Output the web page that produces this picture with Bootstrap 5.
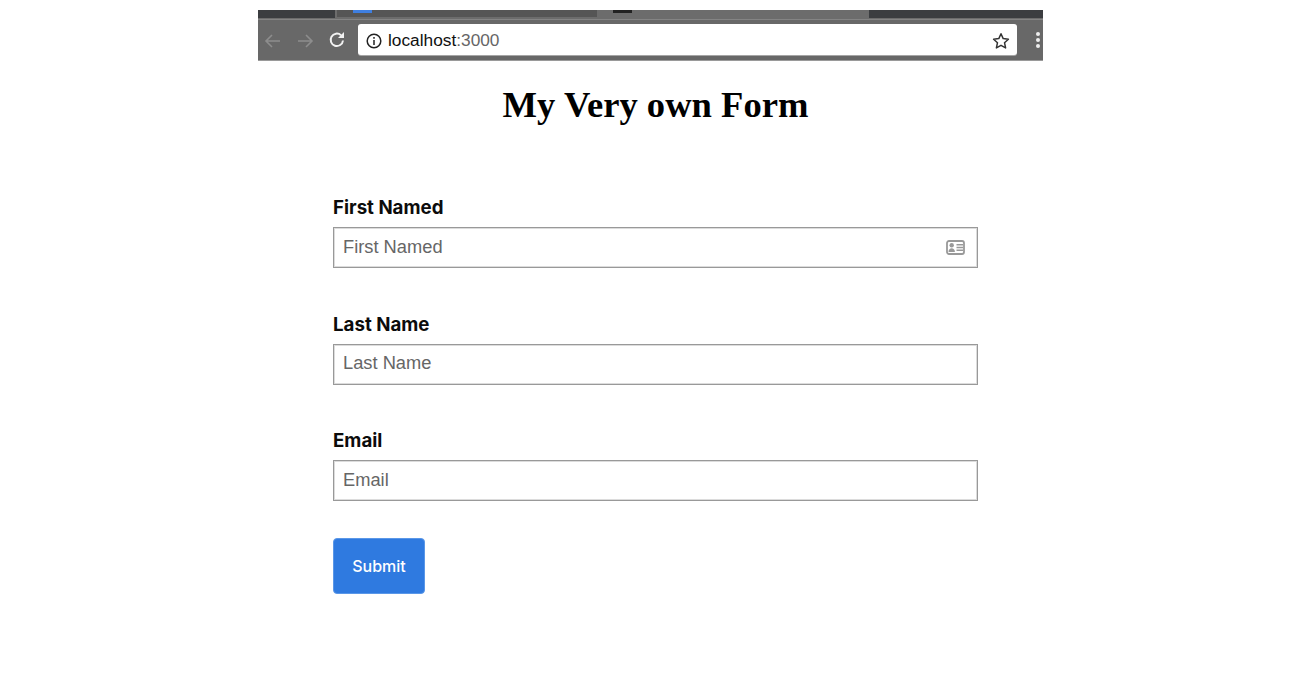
<!DOCTYPE html>
<html lang="en">
<head>
<meta charset="utf-8">
<title>My Very own Form</title>
<link href="https://cdn.jsdelivr.net/npm/bootstrap@5.3.0/dist/css/bootstrap.min.css" rel="stylesheet">
<style>
html, body { height: 674px; overflow: hidden; background: #fff; }
body { padding-top: 10px; font-family: "Liberation Sans", Arial, sans-serif; }
.shot { width: 785px; margin-left: 258px; }
.tabstrip { height: 9px; background: #6c6c6c; overflow: hidden; }
.tab-dark { background: #3b3d40; height: 8px; }
.tab-a { width: 77px; }
.tab-b { width: 174px; }
.tab-gap { width: 2px; }
.tab-mid { width: 260px; height: 7px; background: #555; }
.fav { display: block; width: 19px; height: 3px; background: #3f7fe0; margin-left: 16px; }
.tab-c { width: 40px; padding-left: 16px; }
.nub { display: block; width: 19px; height: 3px; background: #222; }
.toolbar { height: 42px; background: #686868; border-top: 1px solid #848484; border-bottom: 1px solid #9a9a9a; padding-left: 5px; }
.nav-ico { width: 32px; flex: none; }
.nav-ico-last { width: 27px; margin-top: -2px; }
.urlbar { width: 659px; height: 31px; margin-left: 4px; margin-bottom: 2px; background: #fff; border-radius: 3px; padding: 3px 7px 0 8px; flex: none; box-shadow: 0 1px 0 #a5a5a5; }
.urltext { font-size: 17.3px; line-height: 1; color: #111; margin-left: 6px; }
.urltext span { color: #666; }
.dots { margin-left: 19px; width: 4px; }
.dots i { display: block; width: 4px; height: 4px; border-radius: 50%; background: #eee; margin-bottom: 2px; }
.page-title { font-family: "Liberation Serif", "Times New Roman", serif; font-weight: 700; font-size: 36.6px; line-height: 42px; text-align: center; color: #000; margin: 23px 0 0 0; padding-left: 10px; }
.form-area { width: 645px; margin-left: 75px; margin-top: 70px; }
.fld { margin-bottom: 44.5px; }
.fld-label { font-family: Inter, "Liberation Sans", sans-serif; font-weight: 700; font-size: 18.7px; line-height: 24px; color: #0c0c0c; display: block; margin-bottom: 7px; }
.fld-box { position: relative; }
.fld-input { height: 41px; border: 1px solid #999; border-radius: 0; padding: 0 9px 2px; font-size: 18.3px; color: #333; font-family: "Liberation Sans", Arial, sans-serif; box-shadow: inset 0 0 0 1px #dcdcdc; }
.fld-input::placeholder { color: #666; opacity: 1; }
.fld-ico { position: absolute; right: 13px; top: 13px; }
.go-btn { width: 92px; height: 56px; background: #2f7ae0; border: 1px solid #5a97e8; border-radius: 4px; color: #fff; font-family: Inter, "Liberation Sans", sans-serif; font-weight: 500; font-size: 16px; padding: 0; margin-top: -8px; }
.go-btn:hover { background: #2f7ae0; color: #fff; }
</style>
</head>
<body>
<div class="shot">
  <div class="tabstrip d-flex align-items-start">
    <div class="tab-dark tab-a"></div>
    <div class="tab-gap"></div>
    <div class="tab-mid"><span class="fav"></span></div>
    <div class="tab-c"><span class="nub"></span></div>
    <div class="tab-b ms-auto tab-dark"></div>
  </div>
  <div class="toolbar d-flex align-items-center">
    <span class="nav-ico"><svg width="20" height="18" viewBox="0 0 20 18" fill="none" stroke="#8d8d8d" stroke-width="1.6"><path d="M17 9H3M9 3 3 9l6 6"/></svg></span>
    <span class="nav-ico"><svg width="20" height="18" viewBox="0 0 20 18" fill="none" stroke="#8d8d8d" stroke-width="1.6"><path d="M3 9h14M11 3l6 6-6 6"/></svg></span>
    <span class="nav-ico nav-ico-last"><svg width="20" height="20" viewBox="0 0 20 20" fill="none" stroke="#f2f2f2" stroke-width="2"><path d="M16 10.5A6.2 6.2 0 1 1 14 5.2"/><path d="M17 2v6h-6" fill="#f2f2f2" stroke="none"/></svg></span>
    <div class="urlbar d-flex align-items-center">
      <svg width="16" height="16" viewBox="0 0 16 16" fill="none" stroke="#222" stroke-width="1.5"><circle cx="8" cy="8" r="6.8"/><path d="M8 7v5M8 4v1.8"/></svg>
      <div class="urltext">localhost<span>:3000</span></div>
      <svg class="ms-auto" width="18" height="18" viewBox="0 0 18 18" fill="none" stroke="#333" stroke-width="1.5" stroke-linejoin="round"><path d="M9 1.8l2.2 4.8 5.2.6-3.9 3.5 1.1 5.2L9 13.3l-4.6 2.6 1.1-5.2-3.9-3.5 5.2-.6z"/></svg>
    </div>
    <div class="dots"><i></i><i></i><i class="mb-0"></i></div>
  </div>
  <h1 class="page-title">My Very own Form</h1>
  <form class="form-area">
    <div class="fld">
      <label class="fld-label" for="f1">First Named</label>
      <div class="fld-box">
        <input id="f1" class="form-control fld-input" placeholder="First Named">
        <svg class="fld-ico" width="19" height="15" viewBox="0 0 19 15" fill="none"><rect x="1" y="1" width="17" height="13" rx="2" stroke="#999" stroke-width="1.8"/><circle cx="5.7" cy="5.3" r="2.2" fill="#999"/><path d="M2.5 12c0-5 6.4-5 6.4 0z" fill="#999"/><path d="M10.5 4.8H17M10.5 7.5H17M10.5 10.2H17" stroke="#999" stroke-width="1.6"/></svg>
      </div>
    </div>
    <div class="fld">
      <label class="fld-label" for="f2">Last Name</label>
      <div class="fld-box"><input id="f2" class="form-control fld-input" placeholder="Last Name"></div>
    </div>
    <div class="fld">
      <label class="fld-label" for="f3">Email</label>
      <div class="fld-box"><input id="f3" class="form-control fld-input" placeholder="Email"></div>
    </div>
    <button type="button" class="btn go-btn">Submit</button>
  </form>
</div>
<script src="https://cdn.jsdelivr.net/npm/bootstrap@5.3.0/dist/js/bootstrap.bundle.min.js"></script>
</body>
</html>
